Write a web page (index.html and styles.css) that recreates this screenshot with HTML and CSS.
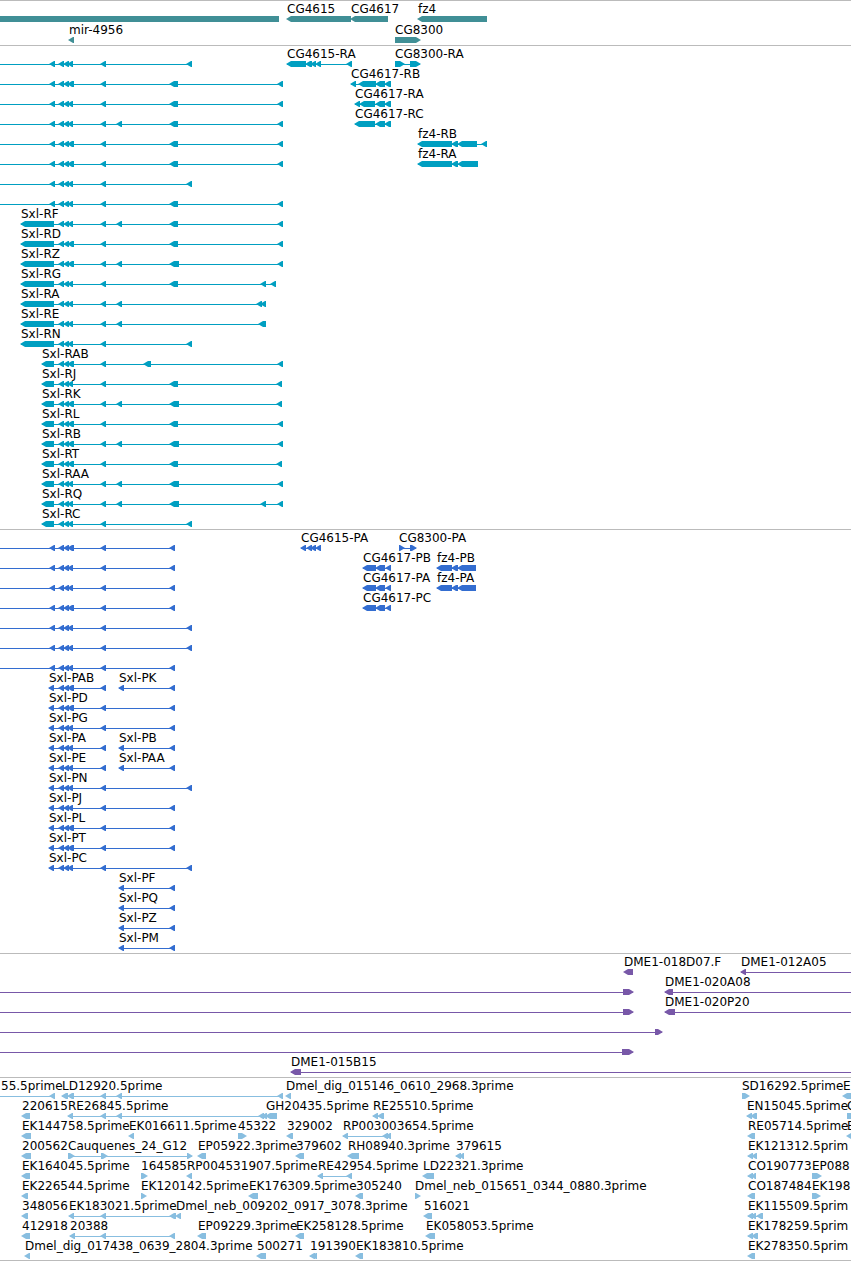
FILE: index.html
```
<!DOCTYPE html>
<html lang="en">
<head>
    <meta charset="UTF-8">
    <meta name="viewport" content="width=device-width, initial-scale=1.0">
    <title>Sxl region</title>
    <link rel="stylesheet" href="styles.css">
    <script src="tracks.js" defer></script>
</head>
<body>
    <main class="browser">
        <section class="track genes" id="genes" aria-label="Genes"></section>
        <section class="track transcripts" id="transcripts" aria-label="Transcripts"></section>
        <section class="track proteins" id="proteins" aria-label="Proteins"></section>
        <section class="track bacs" id="bacs" aria-label="BAC ends"></section>
        <section class="track ests" id="ests" aria-label="ESTs"></section>
    </main>
</body>
</html>
```
FILE: styles.css
```
body {
    margin: 0;
    background-color: #fff;
    font-family: "DejaVu Sans", sans-serif;
    font-size: 12px;
}
.browser {
    border-bottom: 1px solid #bbb;
}
.track {
    border-top: 1px solid #bbb;
    padding-bottom: 3px;
}
.row {
    display: block;
    width: 100%;
    height: 20px;
    fill: currentColor;
}
/* the exons stick out of the row by 1px */
.row {
    overflow: visible;
}
.track {
    overflow: hidden;
}
.row text {
    fill: #000;
}
.genes {
    color: #408f96;
    padding-bottom: 2px;
}
.genes .row {
    height: 21px;
}
/* genes have no introns, only the solid bar */
.genes .intron {
    display: none;
}
.transcripts {
    color: #009fc1;
}
.proteins {
    color: #336dd0;
}
.bacs {
    color: #7858a8;
}
.ests {
    color: #88bee0;
    padding-bottom: 2px;
}
```
FILE: tracks.js
```
// one array per row, one string per feature: "label|strand|spans"
// spans: "a-b" is an exon, "0" / "end" runs the line off the left / right side
var tracks = {
    genes: [
        ["|.|0-279", "CG4615|<|287-351", "CG4617|<|351-388", "fz4|<|418-487"],
        ["mir-4956|<|69-74", "CG8300|>|395-420"]
    ],
    transcripts: [
        ["|<|0 50-55 59-64 64-69 68-73 101-106 187-192", "CG4615-RA|<|287-306 306-312 311-316 316-321 347-352", "CG8300-RA|>|395-404 410-420"],
        ["|<|0 50-55 59-64 64-69 68-74 101-106 170-178 278-283", "CG4617-RB|<|351-356 359-376 376-385 385-391"],
        ["|<|0 50-55 59-64 64-69 68-73 101-106 170-178 278-283", "CG4617-RA|<|355-360 360-375 376-385 385-391"],
        ["|<|0 50-55 59-64 64-69 68-73 101-106 117-122 170-178 278-283", "CG4617-RC|<|355-375 376-385 385-391"],
        ["|<|0 50-55 59-64 64-69 68-74 101-106 170-178 278-283", "fz4-RB|<|418-452 452-458 458-477 482-487"],
        ["|<|0 50-55 59-64 64-69 68-74 101-106 170-178 278-283", "fz4-RA|<|418-452 452-458 458-478"],
        ["|<|0 50-55 59-64 64-69 68-73 101-106 187-192"],
        ["|<|0 50-55 59-64 64-69 68-73 101-106 170-178 278-283"],
        ["Sxl-RF|<|21-54 59-64 64-69 68-73 101-106 117-122 170-178 278-283"],
        ["Sxl-RD|<|21-54 59-64 64-69 68-74 101-106 170-178 278-283"],
        ["Sxl-RZ|<|21-54 59-64 64-69 68-74 101-106 117-122 170-179 278-283"],
        ["Sxl-RG|<|21-54 59-64 64-69 68-73 101-106 170-178 261-266 271-276"],
        ["Sxl-RA|<|21-54 59-64 64-69 68-73 101-106 117-122 257-262 261-266"],
        ["Sxl-RE|<|21-54 59-64 64-69 68-73 101-106 117-122 259-266"],
        ["Sxl-RN|<|21-54 59-64 64-69 68-73 101-106 187-192"],
        ["Sxl-RAB|<|42-54 59-64 64-69 68-74 101-106 144-151 278-283"],
        ["Sxl-RJ|<|42-54 59-64 64-69 68-73 101-106 170-178 277-282"],
        ["Sxl-RK|<|42-54 59-64 64-69 68-74 101-106 117-122 170-179 277-282"],
        ["Sxl-RL|<|42-54 59-64 64-69 68-74 101-106 170-178 278-283"],
        ["Sxl-RB|<|42-54 59-64 64-69 68-74 101-106 117-122 170-179 278-283"],
        ["Sxl-RT|<|42-54 59-64 64-69 68-74 101-106 170-178 277-282"],
        ["Sxl-RAA|<|42-54 59-64 64-69 68-73 101-106 117-122 170-179 278-283"],
        ["Sxl-RQ|<|42-54 59-64 64-69 68-73 101-106 117-122 170-179 261-266 278-283"],
        ["Sxl-RC|<|42-54 59-64 64-69 68-73 101-106 187-192"]
    ],
    proteins: [
        ["|<|0 50-55 59-64 64-69 68-74 101-106 170-175", "CG4615-PA|<|301-306 307-312 311-316 316-321", "CG8300-PA|>|399-404 410-416"],
        ["|<|0 50-55 59-64 64-69 68-73 101-106 170-175", "CG4617-PB|<|363-376 376-385 386-391", "fz4-PB|<|437-452 452-458 458-476"],
        ["|<|0 50-55 59-64 64-69 68-73 101-106 170-175", "CG4617-PA|<|363-376 376-385 386-391", "fz4-PA|<|437-452 452-458 458-476"],
        ["|<|0 50-55 59-64 64-69 68-74 101-106 170-175", "CG4617-PC|<|363-376 376-385 386-391"],
        ["|<|0 50-55 59-64 64-69 68-73 101-106 187-192"],
        ["|<|0 50-55 59-64 64-69 68-73 101-106 187-192"],
        ["|<|0 50-55 59-64 64-69 68-73 101-106 170-175"],
        ["Sxl-PAB|<|49-54 59-64 64-69 68-74 101-106", "Sxl-PK|<|119-124 170-175"],
        ["Sxl-PD|<|49-54 59-64 64-69 68-74 101-106 170-175"],
        ["Sxl-PG|<|49-54 59-64 64-69 68-73 101-106 170-175"],
        ["Sxl-PA|<|49-54 59-64 64-69 68-73 101-106", "Sxl-PB|<|119-124 170-175"],
        ["Sxl-PE|<|49-54 59-64 64-69 68-73 101-106", "Sxl-PAA|<|119-124 170-175"],
        ["Sxl-PN|<|49-54 59-64 64-69 68-73 101-106 187-192"],
        ["Sxl-PJ|<|49-54 59-64 64-69 68-73 101-106 170-175"],
        ["Sxl-PL|<|49-54 59-64 64-69 68-74 101-106 170-175"],
        ["Sxl-PT|<|49-54 59-64 64-69 68-74 101-106 170-175"],
        ["Sxl-PC|<|49-54 59-64 64-69 68-73 101-106 187-192"],
        ["Sxl-PF|<|119-124 170-175"],
        ["Sxl-PQ|<|119-124 170-175"],
        ["Sxl-PZ|<|119-124 170-175"],
        ["Sxl-PM|<|119-124 170-175"]
    ],
    bacs: [
        ["DME1-018D07.F|<|624-633", "DME1-012A05|<|741-746 end"],
        ["|>|0 623-633", "DME1-020A08|<|665-673 end"],
        ["|>|0 623-633", "DME1-020P20|<|665-675 end"],
        ["|>|0 655-662"],
        ["|>|0 622-633"],
        ["DME1-015B15|<|291-301 end"]
    ],
    ests: [
        ["55.5prime|<|0 50-55", "LD12920.5prime|<|62-68 68-74 101-106 117-122 278-283", "Dmel_dig_015146_0610_2968.3prime|<|286-291", "SD16292.5prime|>|742-749", "E|<|843-853"],
        ["220615|<|22-30", "RE26845.5prime|<|68-73 101-106 117-122 259-264 262-267", "GH20435.5prime|<|266-277", "RE25510.5prime|<|373-378 378-384", "EN15045.5prime|<|747-752 751-757", "C|.|847-853"],
        ["EK144758.5prime|<|22-31", "EK016611.5prime|<|129-134", "45322|>|238-246", "329002|<|287-293", "RP003003654.5prime|<|343-348 383-388 386-391", "RE05714.5prime|<|748-755", "E|<|847-855"],
        ["200562|<|22-31", "Cauquenes_24_G12|>|68-74 101-107 187-192", "EP05922.3prime|<|198-206", "379602|<|296-304", "RH08940.3prime|<|348-359", "379615|<|456-461 460-464", "EK121312.5prim|<|748-753 752-757"],
        ["EK164045.5prime|<|22-30", "164585|>|141-147", "RP004531907.5prime|<|187-192", "RE42954.5prime|<|318-323 347-352", "LD22321.3prime|<|423-434", "CO190773|<|748-753 752-756", "EP088|>|812-821"],
        ["EK226544.5prime|<|22-28", "EK120142.5prime|>|141-146", "EK176309.5prime|<|249-258", "305240|<|356-363", "Dmel_neb_015651_0344_0880.3prime|>|415-420", "CO187484|<|748-755", "EK198|>|812-820"],
        ["348056|<|22-28", "EK183021.5prime|<|69-74 101-106 170-176", "Dmel_neb_009202_0917_3078.3prime|<|176-181", "516021|<|424-432", "EK115509.5prim|<|748-753 751-756 757-763"],
        ["412918|<|22-30", "20388|<|70-75 101-106 170-175", "EP09229.3prime|<|198-206", "EK258128.5prime|<|296-304", "EK058053.5prime|<|426-435", "EK178259.5prim|<|748-753 752-758"],
        ["Dmel_dig_017438_0639_2804.3prime|<|25-30", "500271|<|257-266", "191390|<|310-315 312-317", "EK183810.5prime|<|356-363", "EK278350.5prim|<|748-755"]
    ]
};

var TOP = 15, MID = 18, BOTTOM = 21, TIP = 5;

function add(parent, name, attrs) {
    var el = document.createElementNS("http://www.w3.org/2000/svg", name);
    for (var key in attrs) {
        el.setAttribute(key, attrs[key]);
    }
    parent.appendChild(el);
    return el;
}

// bar with a pointed end on the side the strand runs to
function drawExon(row, a, b, strand) {
    var tip = Math.min(TIP, b - a) - 1;
    var points;
    if (strand == "<") {
        points = [[a - 1, MID], [a + tip, TOP], [b, TOP], [b, BOTTOM], [a + tip, BOTTOM]];
    } else if (strand == ">") {
        points = [[a, TOP], [b - tip, TOP], [b + 1, MID], [b - tip, BOTTOM], [a, BOTTOM]];
    } else {
        points = [[a, TOP], [b, TOP], [b, BOTTOM], [a, BOTTOM]];
    }
    add(row, "polygon", {points: points.join(" ")});
}

function drawFeature(row, feature) {
    var parts = feature.split("|");
    var spans = parts[2].split(" ");
    var exons = spans.filter(function (s) {
        return s.indexOf("-") > 0;
    }).map(function (s) {
        return s.split("-").map(Number);
    });
    var left = spans[0] == "0" ? 0 : exons[0][0];
    var right = exons[exons.length - 1][1];
    var open = spans[spans.length - 1] == "end";

    // the line is a 1px rect so that it can reach the window's edge
    if (spans.length > 1) {
        add(row, "rect", {
            class: "intron", x: left, y: MID, height: 1,
            width: open ? "100%" : right - left
        });
    }
    exons.forEach(function (e) {
        drawExon(row, e[0], e[1], parts[1]);
    });
    if (parts[0]) {
        // a label of a feature cut off on the left starts at the edge
        add(row, "text", {x: left == 0 ? 1 : left, y: 12}).textContent = parts[0];
    }
}

for (var id in tracks) {
    tracks[id].forEach(function (features) {
        var row = add(document.getElementById(id), "svg", {class: "row"});
        features.forEach(function (f) {
            drawFeature(row, f);
        });
    });
}
```
